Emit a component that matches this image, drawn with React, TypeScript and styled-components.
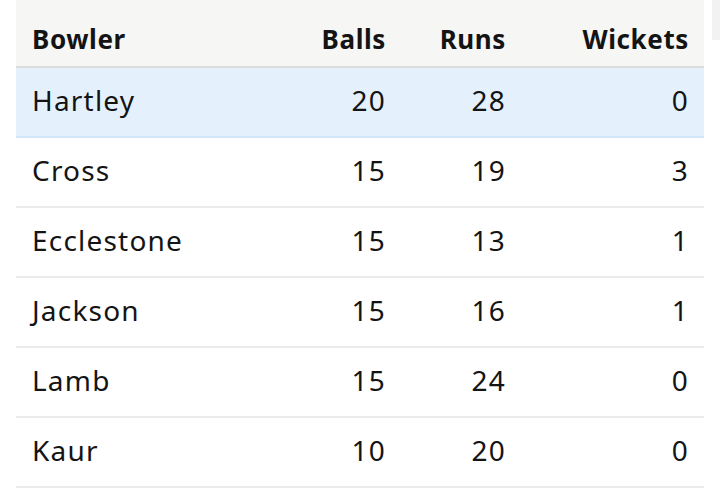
import styled, { createGlobalStyle } from "styled-components";

const GlobalStyle = createGlobalStyle`
  body {
    margin: 0;
    background: #fff;
    font-family: "Noto Sans", "Open Sans", sans-serif;
    color: #141414;
  }
`;

const Wrapper = styled.div`
  display: flex;
  align-items: flex-start;
  gap: 8px;
  padding-left: 16px;
  overflow: hidden;
  width: 720px;
  height: 496px;
  box-sizing: border-box;
`;

const Table = styled.table`
  width: 688px;
  flex: none;
  border-collapse: collapse;
  table-layout: fixed;
`;

const HeadCell = styled.th<{ $align?: "left" | "right"; $width?: number }>`
  height: 66px;
  box-sizing: border-box;
  padding: 23px ${(p) => (p.$align === "right" ? "15px" : "16px")} 11px 16px;
  width: ${(p) => (p.$width ? `${p.$width}px` : "auto")};
  text-align: ${(p) => p.$align || "left"};
  font-size: 26px;
  line-height: 32px;
  font-weight: 700;
  letter-spacing: 0.6px;
  background: #f6f6f5;
  border-bottom: 2px solid #dcdcdc;
`;

const Row = styled.tr<{ $active?: boolean }>`
  background: ${(p) => (p.$active ? "#e4f1fd" : "#fff")};
  border-bottom: 2px solid ${(p) => (p.$active ? "#d2e6fa" : "#ebebeb")};
`;

const Cell = styled.td<{ $align?: "left" | "right" }>`
  height: 68px;
  box-sizing: border-box;
  padding: 14px ${(p) => (p.$align === "right" ? "15px" : "16px")} 18px 16px;
  text-align: ${(p) => p.$align || "left"};
  font-size: 28px;
  line-height: 36px;
  font-weight: 400;
  letter-spacing: 1.2px;
`;

const SideBox = styled.div`
  flex: none;
  width: 40px;
  height: 40px;
  background: #f2f2f2;
`;

const bowlers = [
  { name: "Hartley", balls: 20, runs: 28, wickets: 0 },
  { name: "Cross", balls: 15, runs: 19, wickets: 3 },
  { name: "Ecclestone", balls: 15, runs: 13, wickets: 1 },
  { name: "Jackson", balls: 15, runs: 16, wickets: 1 },
  { name: "Lamb", balls: 15, runs: 24, wickets: 0 },
  { name: "Kaur", balls: 10, runs: 20, wickets: 0 },
];

const App = () => {
  return (
    <>
      <GlobalStyle />
      <Wrapper>
        <Table>
          <thead>
            <tr>
              <HeadCell>Bowler</HeadCell>
              <HeadCell $align="right" $width={120}>Balls</HeadCell>
              <HeadCell $align="right" $width={120}>Runs</HeadCell>
              <HeadCell $align="right" $width={183}>Wickets</HeadCell>
            </tr>
          </thead>
          <tbody>
            {bowlers.map((b, i) => (
              <Row key={b.name} $active={i === 0}>
                <Cell>{b.name}</Cell>
                <Cell $align="right">{b.balls}</Cell>
                <Cell $align="right">{b.runs}</Cell>
                <Cell $align="right">{b.wickets}</Cell>
              </Row>
            ))}
          </tbody>
        </Table>
        <SideBox />
      </Wrapper>
    </>
  );
};

export default App;
